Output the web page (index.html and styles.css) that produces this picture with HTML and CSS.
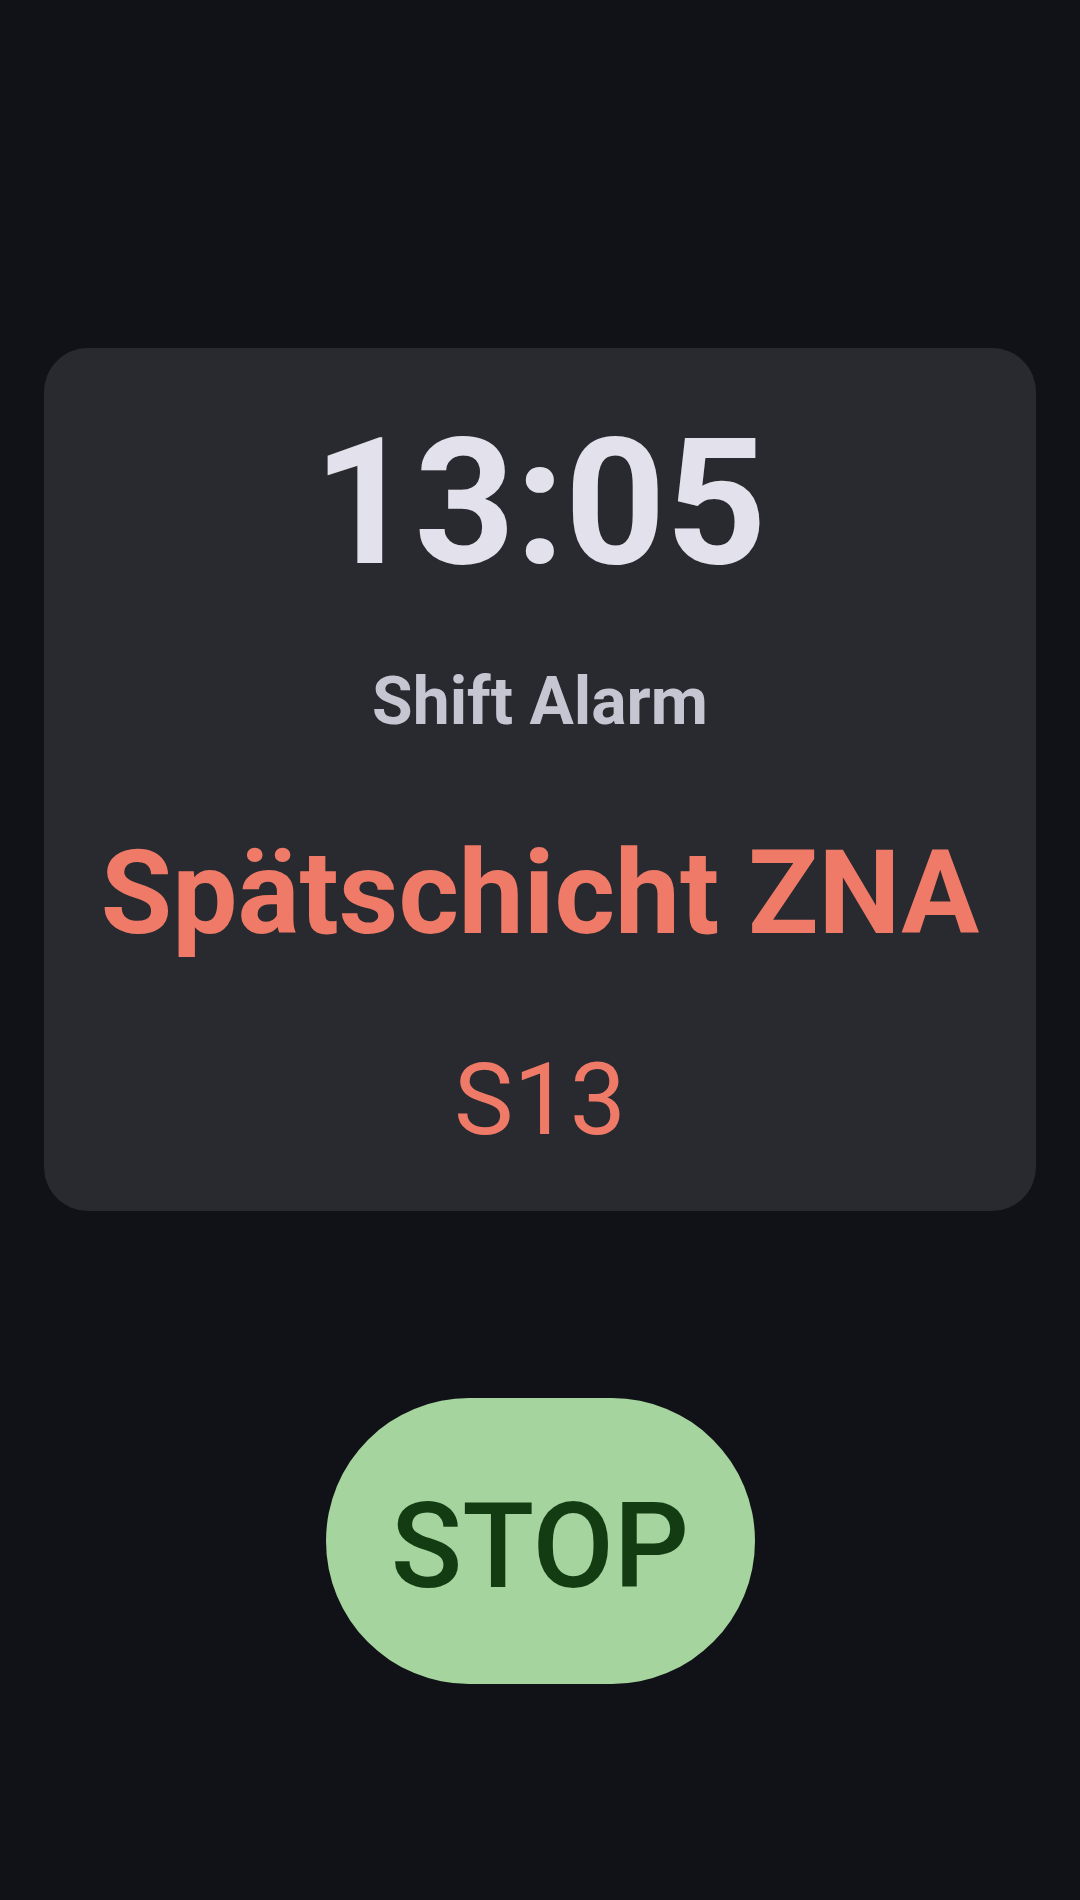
FILE: index.html
```html
<!DOCTYPE html>
<html lang="de">
<head>
<meta charset="utf-8">
<title>Shift Alarm</title>
<link rel="stylesheet" href="styles.css">
</head>
<body>
<main class="screen">
  <section class="card">
    <div class="time">13:05</div>
    <div class="label">Shift Alarm</div>
    <div class="shift-name">Spätschicht ZNA</div>
    <div class="shift-code">S13</div>
  </section>
  <button class="stop" type="button">STOP</button>
</main>
</body>
</html>
```

FILE: styles.css
```css
html, body {
  margin: 0;
  padding: 0;
  background: #111217;
}

body {
  width: 1080px;
  height: 1900px;
  font-family: Roboto, "Noto Sans", sans-serif;
}

.screen {
  display: flex;
  flex-direction: column;
  align-items: center;
  padding: 348px 44px 0;
}

.card {
  align-self: stretch;
  background: #292a30;
  border-radius: 44px;
  display: flex;
  flex-direction: column;
  align-items: center;
  padding: 67px 0 61px;
}

.time {
  font-size: 176px;
  line-height: 1;
  font-weight: 700;
  color: #e3e1ec;
}

.label {
  margin-top: 78px;
  font-size: 66px;
  line-height: 1;
  font-weight: 700;
  color: #c6c5d2;
}

.shift-name {
  margin-top: 100px;
  font-size: 116px;
  line-height: 1;
  font-weight: 700;
  color: #ef7a67;
}

.shift-code {
  margin-top: 99px;
  font-size: 100px;
  line-height: 1;
  font-weight: 400;
  color: #ef7a67;
}

.stop {
  margin-top: 187px;
  width: 429px;
  height: 286px;
  border: none;
  border-radius: 143px;
  background: #a6d49e;
  color: #133c13;
  font-family: Roboto, "Noto Sans", sans-serif;
  font-size: 118px;
  line-height: 1;
  font-weight: 500;
  padding: 12px 0 0;
  display: flex;
  align-items: center;
  justify-content: center;
}
```
